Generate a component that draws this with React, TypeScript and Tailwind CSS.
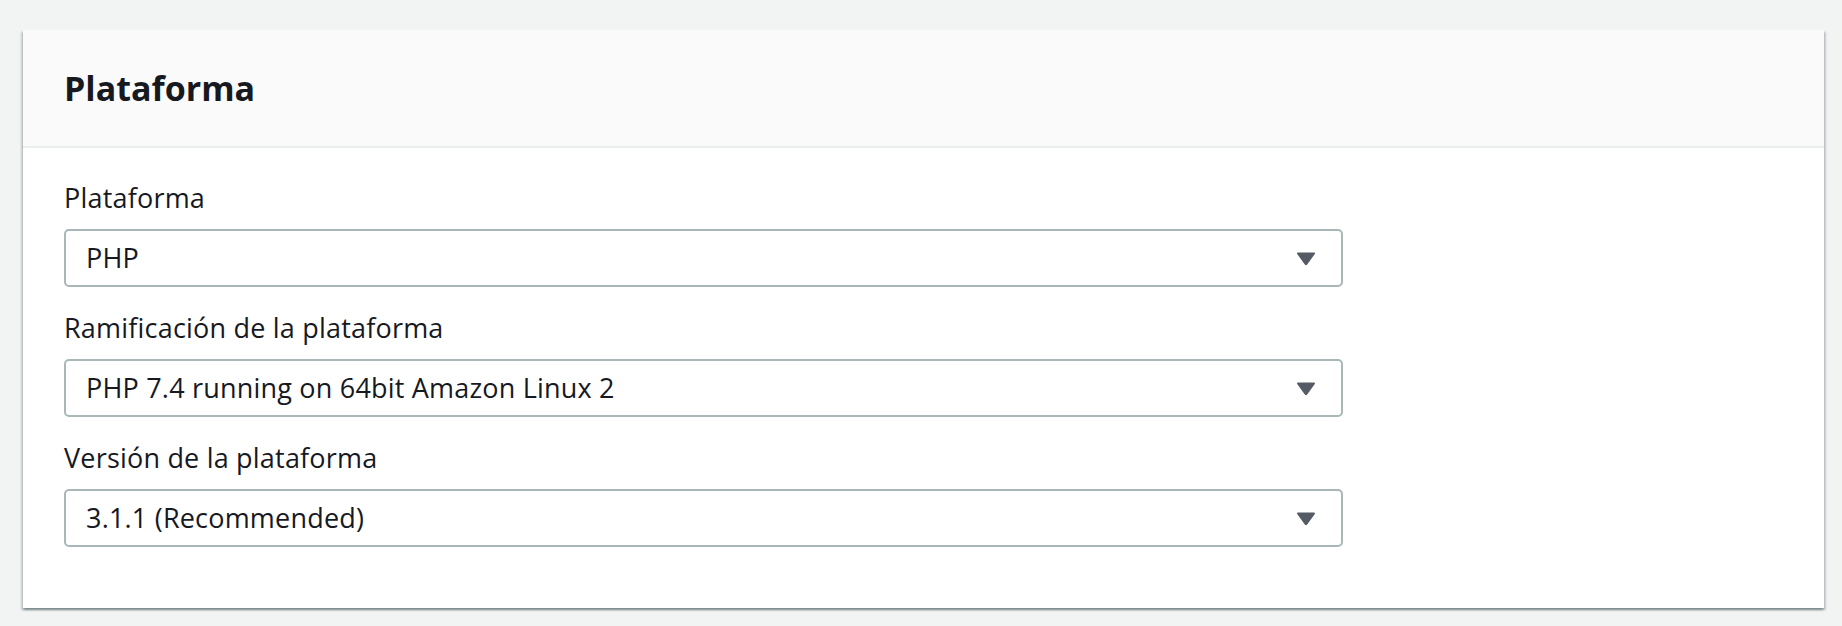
import React from "react";

interface SelectFieldProps {
  label: string;
  value: string;
}

// Dropdown caret drawn as a slightly rounded triangle
function Caret() {
  return (
    <svg width="20" height="15" viewBox="0 0 20 15" aria-hidden="true">
      <path
        d="M2 1.5 H18 Q19.6 1.5 18.8 3 L11.2 13.6 Q10 15 8.8 13.6 L1.2 3 Q0.4 1.5 2 1.5 Z"
        fill="#545b64"
      />
    </svg>
  );
}

function SelectField({ label, value }: SelectFieldProps) {
  return (
    <div className="flex flex-col">
      <label className="text-[27px] leading-[38px] tracking-[0.2px] text-[#16191f]">{label}</label>
      <div className="mt-[12px] flex h-[58px] w-[1279px] items-center justify-between rounded-[5px] border-2 border-[#aab7b8] bg-white pl-[20px] pr-[25px]">
        <span className="text-[27px] tracking-[0.2px] text-[#16191f]">{value}</span>
        <Caret />
      </div>
    </div>
  );
}

export default function App() {
  return (
    <div
      className="h-[626px] w-[1842px] bg-[#f2f3f3] pl-[23px] pt-[30px]"
      style={{ fontFamily: '"Open Sans", "Noto Sans", Arial, sans-serif' }}
    >
      <div className="w-[1801px] bg-white shadow-[0_2px_2px_0_rgba(0,28,36,0.3),2px_2px_2px_0_rgba(0,28,36,0.15),-2px_2px_2px_0_rgba(0,28,36,0.15)]">
        {/* Header */}
        <div className="flex h-[118px] items-center border-b-2 border-[#eaeded] bg-[#fafafa] px-[41px]">
          <h2 className="text-[34px] font-bold text-[#16191f]">Plataforma</h2>
        </div>

        {/* Fields */}
        <div className="flex flex-col gap-[22px] px-[41px] pb-[61px] pt-[31px]">
          <SelectField label="Plataforma" value="PHP" />
          <SelectField label="Ramificación de la plataforma" value="PHP 7.4 running on 64bit Amazon Linux 2" />
          <SelectField label="Versión de la plataforma" value="3.1.1 (Recommended)" />
        </div>
      </div>
    </div>
  );
}
